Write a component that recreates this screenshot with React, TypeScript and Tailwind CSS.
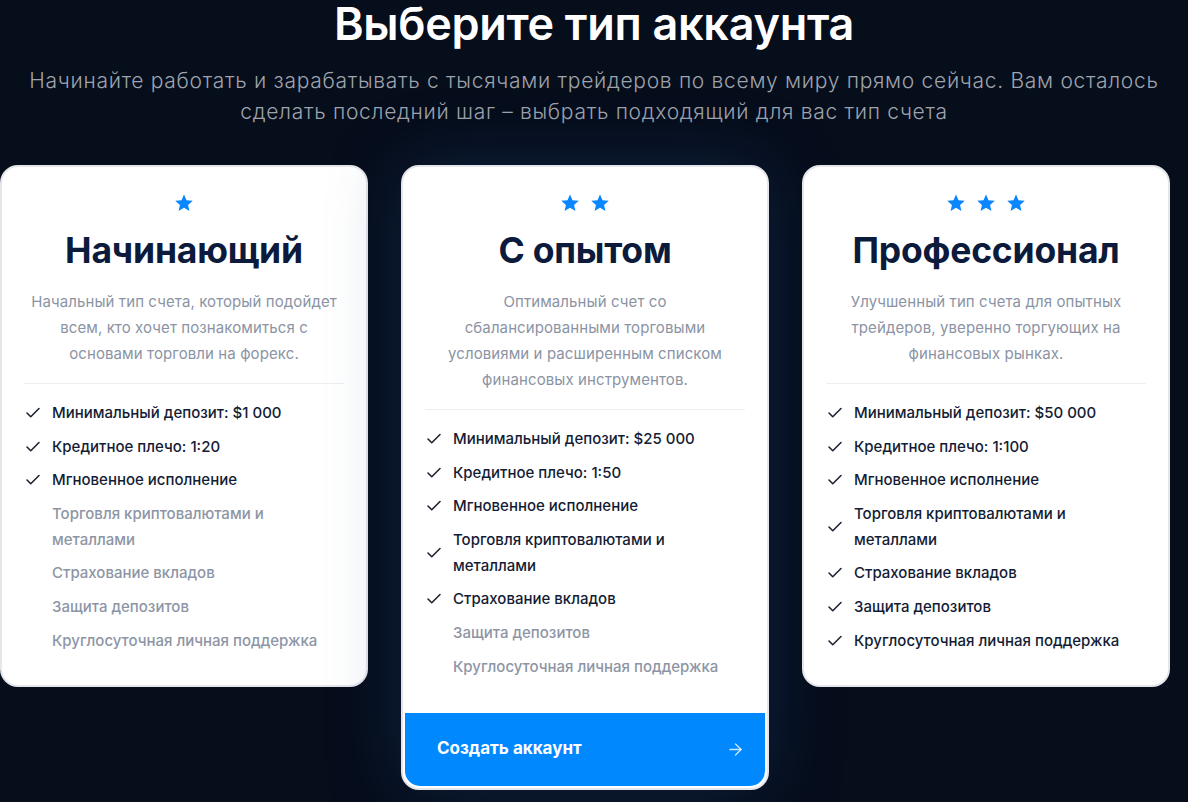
import { Check, ArrowRight } from 'lucide-react';

type Feature = { text: string[]; on: boolean };

interface Plan {
  stars: number;
  title: string;
  desc: string[];
  features: Feature[];
  cta?: boolean;
}

const f = (text: string | string[], on: boolean): Feature => ({
  text: Array.isArray(text) ? text : [text],
  on,
});

const plans: Plan[] = [
  {
    stars: 1,
    title: 'Начинающий',
    desc: ['Начальный тип счета, который подойдет', 'всем, кто хочет познакомиться с', 'основами торговли на форекс.'],
    features: [
      f('Минимальный депозит: $1 000', true),
      f('Кредитное плечо: 1:20', true),
      f('Мгновенное исполнение', true),
      f(['Торговля криптовалютами и', 'металлами'], false),
      f('Страхование вкладов', false),
      f('Защита депозитов', false),
      f('Круглосуточная личная поддержка', false),
    ],
  },
  {
    stars: 2,
    title: 'С опытом',
    desc: ['Оптимальный счет со', 'сбалансированными торговыми', 'условиями и расширенным списком', 'финансовых инструментов.'],
    features: [
      f('Минимальный депозит: $25 000', true),
      f('Кредитное плечо: 1:50', true),
      f('Мгновенное исполнение', true),
      f(['Торговля криптовалютами и', 'металлами'], true),
      f('Страхование вкладов', true),
      f('Защита депозитов', false),
      f('Круглосуточная личная поддержка', false),
    ],
    cta: true,
  },
  {
    stars: 3,
    title: 'Профессионал',
    desc: ['Улучшенный тип счета для опытных', 'трейдеров, уверенно торгующих на', 'финансовых рынках.'],
    features: [
      f('Минимальный депозит: $50 000', true),
      f('Кредитное плечо: 1:100', true),
      f('Мгновенное исполнение', true),
      f(['Торговля криптовалютами и', 'металлами'], true),
      f('Страхование вкладов', true),
      f('Защита депозитов', true),
      f('Круглосуточная личная поддержка', true),
    ],
  },
];

function Star() {
  return (
    <svg width="20" height="20" viewBox="0 0 24 24" className="text-[#0a87ff]">
      <path
        fill="currentColor"
        d="M12 1.8l3.05 6.9 7.45.7-5.65 4.95 1.7 7.35L12 17.8l-6.55 3.9 1.7-7.35L1.5 9.4l7.45-.7z"
      />
    </svg>
  );
}

function PlanCard({ plan }: { plan: Plan }) {
  return (
    <div
      className={
        'flex w-[368px] shrink-0 flex-col rounded-[18px] border-2 border-[#e4e6ea] bg-white ' +
        (plan.cta ? 'shadow-[0_0_70px_rgba(30,70,130,0.35)]' : '')
      }
    >
      <div className="px-[22px] pt-[26px]">
        <div className="flex justify-center gap-[10px]">
          {Array.from({ length: plan.stars }).map((_, i) => (
            <Star key={i} />
          ))}
        </div>
        <h2 className="mt-[16px] text-center text-[35.5px] font-bold leading-[44px] tracking-[-0.2px] text-[#0c1a3c]">
          {plan.title}
        </h2>
        <p className="mt-[16px] text-center text-[15px] leading-[26px] tracking-[0.1px] text-[#8b93a4]">
          {plan.desc.map((line, i) => (
            <span key={i} className="block">
              {line}
            </span>
          ))}
        </p>
        <div className="mt-[16px] h-px bg-[#eceef1]" />
        <ul className="mt-[16px] flex flex-col gap-[7.6px]">
          {plan.features.map((item, i) => (
            <li key={i} className="flex items-center">
              <span className="flex w-[28px] shrink-0">
                {item.on && <Check size={18} strokeWidth={2.1} className="text-[#1c2232]" />}
              </span>
              <span
                className={
                  'text-[15px] font-medium leading-[26px] ' +
                  (item.on ? 'text-[#131c34]' : 'text-[#8d95a5]')
                }
              >
                {item.text.map((line, j) => (
                  <span key={j} className="block">
                    {line}
                  </span>
                ))}
              </span>
            </li>
          ))}
        </ul>
      </div>
      {plan.cta ? (
        <button className="mx-[2px] mb-[2px] mt-[33px] flex h-[73px] items-center justify-between rounded-b-[15px] bg-[#0088ff] pl-[32px] pr-[20px] text-left">
          <span className="text-[17px] font-bold text-white">Создать аккаунт</span>
          <ArrowRight size={19} strokeWidth={1.6} className="text-white/80" />
        </button>
      ) : (
        <div className="h-[31px]" />
      )}
    </div>
  );
}

export default function App() {
  return (
    <div className="min-h-[802px] overflow-hidden bg-[#060d1b] font-['Inter',sans-serif]">
      <h1 className="mt-0 text-center text-[45px] font-semibold leading-[48px] tracking-[-0.3px] text-white">
        Выберите тип аккаунта
      </h1>
      <p className="mt-[17px] text-center text-[21px] font-light leading-[31px] tracking-[0.7px] text-[#9ea3ad]">
        Начинайте работать и зарабатывать с тысячами трейдеров по всему миру прямо сейчас. Вам осталось
        <br />
        сделать последний шаг – выбрать подходящий для вас тип счета
      </p>
      <div className="mt-[38px] flex items-start gap-[33px]">
        {plans.map((p) => (
          <PlanCard key={p.title} plan={p} />
        ))}
      </div>
    </div>
  );
}
